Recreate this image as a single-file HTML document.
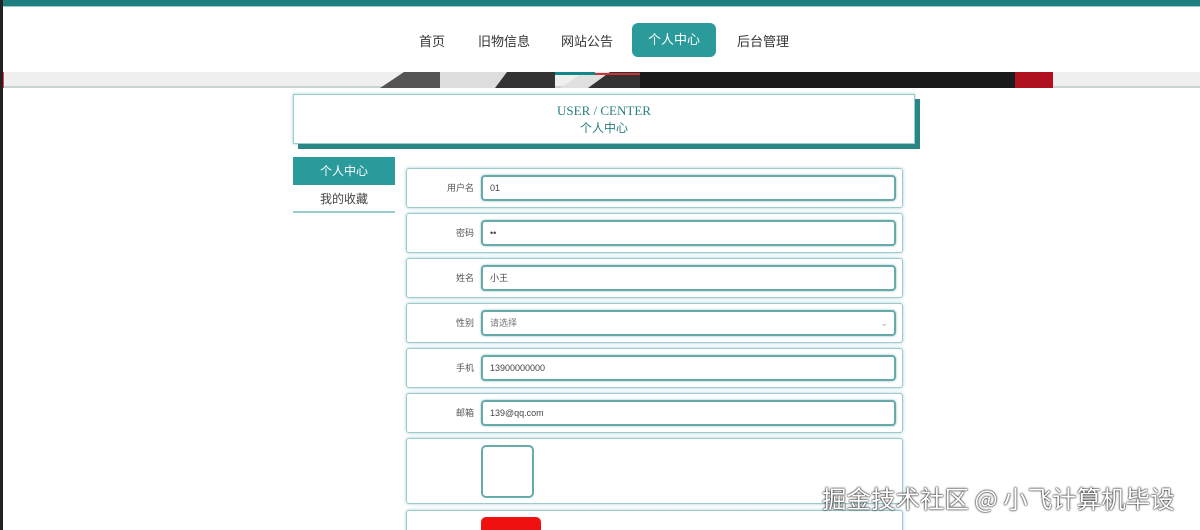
<!DOCTYPE html>
<html><head><meta charset="utf-8"><style>
*{box-sizing:border-box;margin:0;padding:0}
html,body{width:1200px;height:530px;overflow:hidden}
body{background:#fff;font-family:"Liberation Sans","Noto Sans CJK SC",sans-serif;position:relative}
.top{position:absolute;left:0;top:0;width:1200px;height:7px;background:#1f7f7f;border-bottom:1px solid #9cc}
.lb{position:absolute;left:0;top:0;width:3px;height:530px;background:#222;z-index:5}
.nav a{position:absolute;top:31px;font-size:13px;color:#333;text-decoration:none}
.act{position:absolute;left:632px;top:23px;width:84px;height:34px;background:#2a9a9a;border-radius:6px;color:#fff;font-size:13px;text-align:center;line-height:33px}
.strip{position:absolute;left:0;top:72px;width:1200px;height:16px;background:#efefef;border-bottom:2px solid #c8d4d4}
.hdr{position:absolute;left:293px;top:94px;width:622px;height:50px;background:#fff;border:1px solid #9cc;box-shadow:5px 5px 0 #2a8585,0 0 3px #9cc;text-align:center;font-family:"Liberation Serif","Noto Serif CJK SC",serif;color:#2a7f7f}
.side{position:absolute;left:293px;width:102px;height:28px;font-size:12px;text-align:center;line-height:28px}
.row{position:absolute;left:406px;width:497px;height:40px;border:1px solid #9cc;border-radius:3px;box-shadow:0 0 3px #acd}
.row label{position:absolute;right:428px;top:12px;font-size:9px;color:#555}
.inp{position:absolute;left:74px;top:6px;width:415px;height:26px;border:2px solid #6aa;border-radius:4px;box-shadow:0 0 2px #8bb;font-size:9px;color:#444;line-height:22px;padding-left:7px}
.wm{position:absolute;left:822px;top:481px;font-size:24.5px;color:#fff;text-shadow:0 0 2px #000,0 0 1px #000;font-family:"Noto Sans CJK SC",sans-serif;white-space:nowrap}
</style></head><body>
<div class="top"></div>
<div class="lb"></div>
<div class="nav"><a style="left:419px">首页</a><a style="left:478px">旧物信息</a><a style="left:561px">网站公告</a><a style="left:737px">后台管理</a></div>
<div class="act">个人中心</div>
<div class="strip">
<div style="position:absolute;left:380px;top:0;width:80px;height:16px;background:#555;clip-path:polygon(30% 0,100% 0,100% 100%,0 100%)"></div>
<div style="position:absolute;left:440px;top:0;width:110px;height:16px;background:#ddd"></div>
<div style="position:absolute;left:495px;top:0;width:60px;height:16px;background:#333;clip-path:polygon(20% 0,100% 0,100% 100%,0 100%)"></div>
<div style="position:absolute;left:560px;top:0;width:80px;height:16px;background:#e0e0e0;clip-path:polygon(30% 0,100% 0,100% 100%,0 100%)"></div>
<div style="position:absolute;left:588px;top:0;width:55px;height:16px;background:#333;clip-path:polygon(40% 0,100% 0,100% 100%,0 100%)"></div>
<div style="position:absolute;left:555px;top:0;width:40px;height:3px;background:#188"></div>
<div style="position:absolute;left:595px;top:1px;width:45px;height:2px;background:#c33"></div>
<div style="position:absolute;left:640px;top:0;width:375px;height:16px;background:#1a1a1a"></div>
<div style="position:absolute;left:1015px;top:0;width:38px;height:16px;background:#b01020"></div>
<div style="position:absolute;left:0;top:0;width:4px;height:16px;background:#e44"></div>
</div>
<div class="hdr"><div style="font-size:13px;margin-top:8px">USER / CENTER</div><div style="font-size:12px;margin-top:0px;font-family:'Noto Sans CJK SC',sans-serif">个人中心</div></div>
<div class="side" style="top:157px;background:#2a9a9a;color:#fff">个人中心</div>
<div class="side" style="top:185px;color:#444;border-bottom:2px solid #9cc">我的收藏</div>
<div class="row" style="top:168px"><label>用户名</label><div class="inp">01</div></div>
<div class="row" style="top:213px"><label>密码</label><div class="inp">••</div></div>
<div class="row" style="top:258px"><label>姓名</label><div class="inp">小王</div></div>
<div class="row" style="top:303px"><label>性别</label><div class="inp" style="color:#777">请选择<span style="position:absolute;right:6px;color:#aaa">⌄</span></div></div>
<div class="row" style="top:348px"><label>手机</label><div class="inp">13900000000</div></div>
<div class="row" style="top:393px"><label>邮箱</label><div class="inp">139@qq.com</div></div>
<div class="row" style="top:438px;height:66px"><div style="position:absolute;left:74px;top:6px;width:53px;height:53px;border:2px solid #6aa;border-radius:5px"></div></div>
<div class="row" style="top:510px;height:40px"><div style="position:absolute;left:74px;top:6px;width:60px;height:30px;background:#f01010;border-radius:5px"></div></div>
<div class="wm">掘金技术社区 @ 小飞计算机毕设</div>
</body></html>
